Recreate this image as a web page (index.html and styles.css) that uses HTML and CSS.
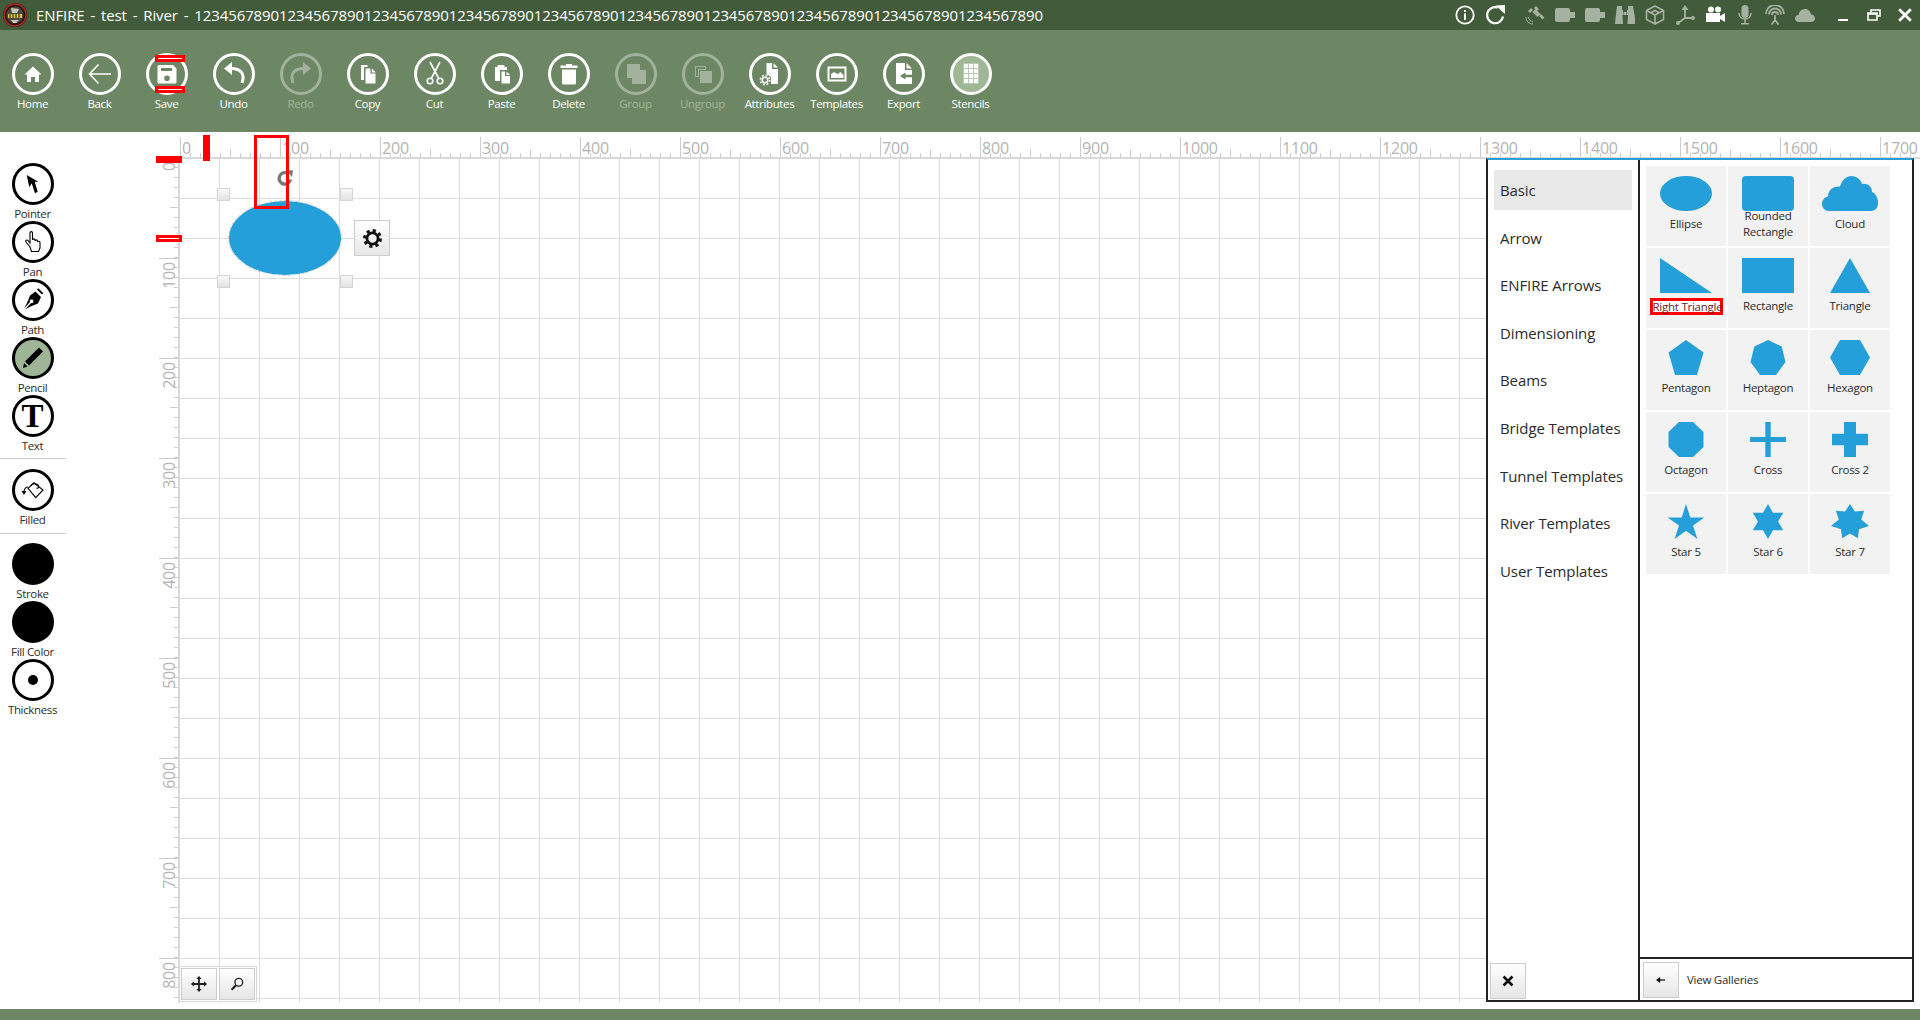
FILE: index.html
```html
<!DOCTYPE html>
<html>
<head>
<meta charset="utf-8">
<title>ENFIRE</title>
<link rel="stylesheet" href="styles.css">
</head>
<body>
<div class="app">

  <!-- title bar -->
  <div class="titlebar">
    <svg class="logo" viewBox="0 0 24 24">
      <circle cx="12" cy="12" r="12" fill="#2a1512"/>
      <circle cx="12" cy="12" r="11" fill="none" stroke="#b32a24" stroke-width="1.4"/>
      <circle cx="12" cy="12" r="8.5" fill="#4b4a42"/>
      <path d="M5 11h14v4H5z" fill="#d8c04a"/>
      <path d="M7 11v4M10 11v4M13 11v4M16 11v4" stroke="#222" stroke-width="1"/>
      <path d="M8 5l8 1-2 4H9zM8 17h8l-3 3h-3z" fill="#c9c6b8"/>
    </svg>
    <div class="title">ENFIRE - test - River - 1234567890123456789012345678901234567890123456789012345678901234567890123456789012345678901234567890</div>
    <div class="status-icons">
      <span class="sbtn on"><svg viewBox="0 0 20 20"><circle cx="10" cy="10" r="8.7" fill="none" stroke="currentColor" stroke-width="1.8"/><path d="M9 8.5h2V15H9zM9 5h2v2H9z"/></svg></span>
      <span class="sbtn on"><svg viewBox="0 0 20 20"><path d="M18 11.5A8 8 0 1 1 12.5 2.6" fill="none" stroke="currentColor" stroke-width="2.2"/><path d="M10.5 0.5 20 0v9z"/></svg></span>
      <span class="status-gap"></span>
      <span class="sbtn"><svg viewBox="0 0 20 20"><path d="M9 3l2-2 3 3-2 2zM7.5 7l3-3 5 5-3 3zM14 11l2-2 3.500 3.500-2 2zM3 6L6 3l2 2-3 3z"/><path d="M1 12c0 4 3 7 7 7M3.500 12c0 2.500 2 4.500 4.500 4.500" fill="none" stroke="currentColor" stroke-width="1"/></svg></span>
      <span class="sbtn"><svg viewBox="0 0 20 20"><rect x="0" y="3" width="15" height="14" rx="2"/><path d="M15 7h5v6h-5z"/></svg></span>
      <span class="sbtn"><svg viewBox="0 0 20 20"><rect x="0" y="3" width="15" height="14" rx="2"/><path d="M15 7h5v6h-5z"/></svg></span>
      <span class="sbtn"><svg viewBox="0 0 20 20"><path d="M2 1h5v4h1v5h-.5l.5 9H0l.5-6zM13 1h5l2 12 .500 6h-8l.5-9H12V5h1z"/><path d="M8.500 7h3v3h-3z"/></svg></span>
      <span class="sbtn"><svg viewBox="0 0 20 20" class="line"><path d="M10 1l8.500 4.500v9L10 19l-8.500-4.500v-9zM1.500 5.500L10 10l8.500-4.500M10 10v9M5.500 8l4.500-2.500L14.500 8"/></svg></span>
      <span class="sbtn"><svg viewBox="0 0 20 20" class="line thick"><path d="M10 2v11l8 0M10 13l-7 5"/><path class="solid" d="M10 0l3.500 5h-7z"/><circle class="solid" cx="18" cy="13" r="2"/><circle class="solid" cx="3" cy="18" r="2"/></svg></span>
      <span class="sbtn on"><svg viewBox="0 0 20 20"><circle cx="6" cy="4.500" r="3"/><circle cx="13" cy="4.500" r="3"/><rect x="1" y="8" width="14" height="9"/><path d="M15 11l5-3v9l-5-3z"/></svg></span>
      <span class="sbtn"><svg viewBox="0 0 20 20"><rect x="6.500" y="0" width="7" height="13" rx="3.500"/><path d="M4 8c0 8 12 8 12 0" fill="none" stroke="currentColor" stroke-width="1.500"/><path d="M9.200 14h1.600v4h3v1.500H6V18h3.200z"/></svg></span>
      <span class="sbtn"><svg viewBox="0 0 20 20" class="line thick"><path d="M1 9a9 9 0 0 1 18 0M4 9.500a6 6 0 0 1 12 0M7 10a3 3 0 0 1 6 0M10 10v5l-3.500 4.500M10 15l3.500 4.500"/></svg></span>
      <span class="sbtn"><svg viewBox="0 0 20 20"><path d="M4 17c-2.500 0-4-1.500-4-3.500S1.500 10 3.500 10C4 7 6 4 10 4c3.500 0 5.500 2.500 6 5.500 2.500 0 4 2 4 4s-1.500 3.500-4 3.500z"/></svg></span>
    </div>
    <div class="window-btns">
      <span class="wbtn"><svg viewBox="0 0 12 14"><path d="M1 11h10v2H1z"/></svg></span>
      <span class="wbtn"><svg viewBox="0 0 14 12" class="line"><path d="M4 3V1h9v6h-3M1 4h9v7H1zM1 5h9"/></svg></span>
      <span class="wbtn"><svg viewBox="0 0 12 12" class="line close"><path d="M1 1l10 10M11 1L1 11"/></svg></span>
    </div>
  </div>

  <!-- main ribbon -->
  <div class="toolbar">
    <div class="tb-item"><span class="tb-circle"><svg viewBox="0 0 36 36"><path d="M18 10.500l8.500 8H24V26h-4v-5h-4v5h-4v-7.500H9.500z"/></svg></span><span class="tb-label">Home</span></div>
    <div class="tb-item"><span class="tb-circle"><svg viewBox="0 0 36 36" class="line"><path d="M29 18H8M16.500 8.500L7.500 18l9 9.500"/></svg></span><span class="tb-label">Back</span></div>
    <div class="tb-item"><span class="tb-circle"><svg viewBox="0 0 36 36"><path fill-rule="evenodd" d="M10 9h14l3.500 3.500V26a1.500 1.500 0 0 1-1.500 1.500H10A1.500 1.500 0 0 1 8.500 26V10.500A1.500 1.500 0 0 1 10 9zM12 12v3h11v-3zM18 19.500a2.800 2.800 0 1 0 0 5.600 2.800 2.800 0 0 0 0-5.600z"/></svg></span><span class="tb-label">Save</span></div>
    <div class="tb-item"><span class="tb-circle"><svg viewBox="0 0 36 36"><path d="M26 27c3-8 0-14.500-11-14.500" fill="none" stroke="currentColor" stroke-width="3"/><path d="M8 12.500L16 6v13z"/></svg></span><span class="tb-label">Undo</span></div>
    <div class="tb-item off"><span class="tb-circle"><svg viewBox="0 0 36 36"><path d="M10 27c-3-8 0-14.500 11-14.500" fill="none" stroke="currentColor" stroke-width="3"/><path d="M28 12.500L20 6v13z"/></svg></span><span class="tb-label">Redo</span></div>
    <div class="tb-item"><span class="tb-circle"><svg viewBox="0 0 36 36"><path d="M11 9h6.500v2H14v13h-3z"/><path fill-rule="evenodd" d="M15.500 12.500h4.800l.2 5h5v10h-10z"/><path d="M21.800 12.500l4 4h-4z"/></svg></span><span class="tb-label">Copy</span></div>
    <div class="tb-item"><span class="tb-circle"><svg viewBox="0 0 36 36" class="line"><path d="M13 6l8.500 16M23 6l-8.500 16"/><circle cx="13" cy="25" r="2.800"/><circle cx="23" cy="25" r="2.800"/></svg></span><span class="tb-label">Cut</span></div>
    <div class="tb-item"><span class="tb-circle"><svg viewBox="0 0 36 36"><path d="M11 11h2.500V9h7v2H23v3h-7v11h-5z"/><path d="M17.500 15.500h3.500v4.500h5v7.500h-8.500z"/><path d="M22.500 15.500l3.500 3.500h-3.500z"/></svg></span><span class="tb-label">Paste</span></div>
    <div class="tb-item"><span class="tb-circle"><svg viewBox="0 0 36 36"><path d="M15 8h6v1.500h5.500V12h-17V9.500H15zM11 13.500h14V27a1.500 1.500 0 0 1-1.500 1.500h-11A1.500 1.500 0 0 1 11 27z"/></svg></span><span class="tb-label">Delete</span></div>
    <div class="tb-item off"><span class="tb-circle"><svg viewBox="0 0 36 36"><path d="M9 8h13v6h6v14H14v-6H9z"/></svg></span><span class="tb-label">Group</span></div>
    <div class="tb-item off"><span class="tb-circle"><svg viewBox="0 0 36 36"><path fill-rule="evenodd" d="M10 10h11v4h-7v7h-4zM11 11v9h2v-7h7v-2z"/><path d="M15 15h12v12H15z"/></svg></span><span class="tb-label">Ungroup</span></div>
    <div class="tb-item"><span class="tb-circle"><svg viewBox="0 0 36 36"><path d="M14.500 7H20v6h6v15h-7v-7l-4.500-3z"/><path d="M21.500 7l4.500 4.500h-4.500z"/><circle cx="13" cy="24" r="2.800" fill="none" stroke="currentColor" stroke-width="1.500"/><circle cx="13" cy="24" r="4.700" fill="none" stroke="currentColor" stroke-width="1.600" stroke-dasharray="1.800 1.900"/></svg></span><span class="tb-label">Attributes</span></div>
    <div class="tb-item"><span class="tb-circle"><svg viewBox="0 0 36 36"><path fill-rule="evenodd" d="M8.500 10.500h19v15h-19zM10.500 12.500v11h15v-11z"/><path d="M12 22v-4l3-2 3.500 2 3-2 3 3v3z"/></svg></span><span class="tb-label">Templates</span></div>
    <div class="tb-item"><span class="tb-circle"><svg viewBox="0 0 36 36"><path d="M10 7h9v7h7v14H10z"/><path d="M20.500 7l5.500 5.500h-5.500z"/><path d="M28 20H16" class="toolbar-cut"/><path d="M19.500 16.500L14 20l5.500 3.500z" class="toolbar-cutfill"/></svg></span><span class="tb-label">Export</span></div>
    <div class="tb-item active"><span class="tb-circle"><svg viewBox="0 0 36 36"><rect x="10" y="7" width="16" height="21" fill="#b9cab1"/><path d="M11 8h4v4h-4zM16 8h4v4h-4zM21 8h4v4h-4zM11 13h4v4h-4zM16 13h4v4h-4zM21 13h4v4h-4zM11 18h4v4h-4zM16 18h4v4h-4zM21 18h4v4h-4zM11 23h4v4h-4zM16 23h4v4h-4zM21 23h4v4h-4z"/></svg></span><span class="tb-label">Stencils</span></div>
  </div>

  <div class="main">

    <!-- drawing tools -->
    <div class="tools">
      <div class="tool-group">
        <div class="tool"><span class="tool-circle"><svg viewBox="0 0 36 36"><path d="M11.700 9l2.600 12.300 2.400-4L20 27.300l2.700-1.600-3-10h3.600z"/></svg></span><span class="tool-label">Pointer</span></div>
        <div class="tool"><span class="tool-circle"><svg viewBox="0 0 36 36" class="line thin"><path d="M15 23l-4-5c-1-1.500 1-2.500 2-1.500l2 2.500V9c0-1.800 2.500-1.800 2.500 0v7c0-1.500 2.500-1.500 2.500 0v1c0-1.500 2.500-1.500 2.500 0v1c0-1.200 2.500-1 2.500 .5V24l-1.500 3.500h-7z"/></svg></span><span class="tool-label">Pan</span></div>
        <div class="tool"><span class="tool-circle"><svg viewBox="0 0 36 36"><path d="M22 7.500l1.300-1.300 5 5-1.300 1.300z"/><path d="M20.500 9.500l5.500 5.500-3 6.500-7.500 3-5.500 3 6-6.500a1.800 1.800 0 1 0-1-1l-6 6.500 3-5.500 3-7.500z"/></svg></span><span class="tool-label">Path</span></div>
        <div class="tool"><span class="tool-circle sel"><svg viewBox="0 0 36 36"><path d="M24 7.500l4 4-14 14-4-4z"/><path d="M9 23l3.500 3.500L8 28z"/></svg></span><span class="tool-label">Pencil</span></div>
        <div class="tool"><span class="tool-circle tool-t">T</span><span class="tool-label">Text</span></div>
      </div>
      <div class="tool-group filled-group">
        <div class="tool"><span class="tool-circle"><svg viewBox="0 0 36 36" class="line thin"><path d="M13 16.300L19 10.700 28 18l-7.300 7.700z"/><path d="M15.500 14c2-3 7-3 8 0 .5 2-1 2.500-2 2"/><path d="M13 15c-2 0-4 2-4 4.500"/><path class="solid" d="M9 23l-2.500-4h5z"/></svg></span><span class="tool-label">Filled</span></div>
      </div>
      <div class="tool"><span class="tool-circle black"></span><span class="tool-label">Stroke</span></div>
      <div class="tool"><span class="tool-circle black"></span><span class="tool-label">Fill Color</span></div>
      <div class="tool"><span class="tool-circle"><span class="dot"></span></span><span class="tool-label">Thickness</span></div>
    </div>

    <div class="workspace">
      <div class="ruler-top">
        <span class="r-corner"></span>
        <span class="rh"><i>0</i></span><span class="rh"><i>100</i></span><span class="rh"><i>200</i></span><span class="rh"><i>300</i></span><span class="rh"><i>400</i></span><span class="rh"><i>500</i></span><span class="rh"><i>600</i></span><span class="rh"><i>700</i></span><span class="rh"><i>800</i></span><span class="rh"><i>900</i></span><span class="rh"><i>1000</i></span><span class="rh"><i>1100</i></span><span class="rh"><i>1200</i></span><span class="rh"><i>1300</i></span><span class="rh"><i>1400</i></span><span class="rh"><i>1500</i></span><span class="rh"><i>1600</i></span><span class="rh"><i>1700</i></span>
      </div>
      <div class="work-row">
        <div class="ruler-left">
          <span class="rv"><i>0</i></span><span class="rv"><i>100</i></span><span class="rv"><i>200</i></span><span class="rv"><i>300</i></span><span class="rv"><i>400</i></span><span class="rv"><i>500</i></span><span class="rv"><i>600</i></span><span class="rv"><i>700</i></span><span class="rv"><i>800</i></span>
        </div>

        <div class="canvas">
          <div class="selection">
            <span class="handle h-tl"></span><span class="handle h-tr"></span><span class="handle h-bl"></span><span class="handle h-br"></span>
            <svg class="rotate" viewBox="0 0 16 16"><path d="M13.500 9.500A5.700 5.700 0 1 1 9 2.800" fill="none" stroke="#777" stroke-width="3.400"/><path d="M9 0l7 .5-1 6.500z" fill="#777"/></svg>
            <div class="ellipse"></div>
            <span class="btn gear"><svg viewBox="0 0 20 20"><circle cx="10" cy="10" r="5.300" fill="none" stroke="#111" stroke-width="2.600"/><circle cx="10" cy="10" r="7.500" fill="none" stroke="#111" stroke-width="3" stroke-dasharray="3 2.890"/></svg></span>
          </div>
          <div class="zoom-btns">
            <span class="btn small"><svg viewBox="0 0 20 20"><path d="M10 1l3 3.500h-2V9h4.500V7l3.500 3-3.500 3v-2H11v4.500h2L10 19l-3-3.500h2V11H4.500v2L1 10l3.500-3v2H9V4.500H7z"/></svg></span>
            <span class="btn small"><svg viewBox="0 0 20 20"><circle cx="12" cy="8" r="4.300" fill="none" stroke="#222" stroke-width="1.500"/><path d="M9 11.500l-5 5" stroke="#222" stroke-width="2.400"/></svg></span>
          </div>
        </div>

        <!-- stencil panel -->
        <div class="panel">
          <div class="panel-nav">
            <div class="nav-item current">Basic</div>
            <div class="nav-item">Arrow</div>
            <div class="nav-item">ENFIRE Arrows</div>
            <div class="nav-item">Dimensioning</div>
            <div class="nav-item">Beams</div>
            <div class="nav-item">Bridge Templates</div>
            <div class="nav-item">Tunnel Templates</div>
            <div class="nav-item">River Templates</div>
            <div class="nav-item">User Templates</div>
            <span class="btn close-btn"><svg viewBox="0 0 12 12"><path d="M1.500 1.500l9 9M10.500 1.500l-9 9" stroke="#111" stroke-width="2.600"/></svg></span>
          </div>
          <div class="panel-gallery">
            <div class="gallery">
              <div class="cell"><svg viewBox="0 0 80 35"><ellipse cx="40" cy="17.500" rx="26" ry="17.500"/></svg><div class="cell-label">Ellipse</div></div>
              <div class="cell"><svg viewBox="0 0 80 35"><rect x="14" y="0" width="52" height="35" rx="4"/></svg><div class="cell-label">Rounded<br>Rectangle</div></div>
              <div class="cell"><svg viewBox="0 0 80 35"><path d="M19 35c-5 0-7-4-7-7.500s3-6.500 6-7c0-6.500 5-10.500 12-10C32 4 37 0 41 0c6 0 10 4 11 8 5-1 10 2 10 8 4 2 6 6 6 11s-3 8-7 8z"/></svg><div class="cell-label">Cloud</div></div>
              <div class="cell"><svg viewBox="0 0 80 35"><polygon points="14,0 66,35 14,35"/></svg><div class="cell-label"><span class="marked">Right Triangle</span></div></div>
              <div class="cell"><svg viewBox="0 0 80 35"><rect x="14" y="0" width="52" height="35"/></svg><div class="cell-label">Rectangle</div></div>
              <div class="cell"><svg viewBox="0 0 80 35"><polygon points="40,0 60,35 20,35"/></svg><div class="cell-label">Triangle</div></div>
              <div class="cell"><svg viewBox="0 0 80 35"><polygon points="40,0 57.500,12.500 51,35 29,35 22.500,12.500"/></svg><div class="cell-label">Pentagon</div></div>
              <div class="cell"><svg viewBox="0 0 80 35"><polygon points="40,0 53.700,6.500 57.500,22 48,35 32,35 22.500,22 26.300,6.500"/></svg><div class="cell-label">Heptagon</div></div>
              <div class="cell"><svg viewBox="0 0 80 35"><polygon points="30,0 50,0 60,17.500 50,35 30,35 20,17.500"/></svg><div class="cell-label">Hexagon</div></div>
              <div class="cell"><svg viewBox="0 0 80 35"><polygon points="33,0 47,0 57.500,10 57.500,25 47,35 33,35 22.500,25 22.500,10"/></svg><div class="cell-label">Octagon</div></div>
              <div class="cell"><svg viewBox="0 0 80 35"><path d="M37.300 0h5.400v15H58v5H42.700v15h-5.400V20H22v-5h15.300z"/></svg><div class="cell-label">Cross</div></div>
              <div class="cell"><svg viewBox="0 0 80 35"><path d="M34 0h12v11.700h12v11.600H46V35H34V23.300H22V11.700h12z"/></svg><div class="cell-label">Cross 2</div></div>
              <div class="cell"><svg viewBox="0 0 80 35"><polygon points="40,0 44.300,13.400 58.400,13.400 47,21.600 51.400,35 40,26.700 28.600,35 33,21.600 21.600,13.400 35.700,13.400"/></svg><div class="cell-label">Star 5</div></div>
              <div class="cell"><svg viewBox="0 0 80 35"><polygon points="40,0 45,8.750 55.200,8.750 50.100,17.500 55.200,26.250 45,26.250 40,35 35,26.250 24.800,26.250 29.900,17.500 24.800,8.750 35,8.750"/></svg><div class="cell-label">Star 6</div></div>
              <div class="cell"><svg viewBox="0 0 80 35"><polygon points="40,0 45,7.600 54.100,6.800 51.200,15.400 59,22 49,25.200 47.800,34.200 40,29.500 32.200,34.200 31,25.200 21,22 28.800,15.400 25.900,6.800 35,7.600"/></svg><div class="cell-label">Star 7</div></div>
            </div>
            <div class="gallery-foot">
              <span class="btn back-btn"><svg viewBox="0 0 12 12"><path d="M11 6H3" stroke="#111" stroke-width="1.500"/><path d="M0 6l5-3.500v7z" fill="#111"/></svg></span>
              <span class="foot-text">View Galleries</span>
            </div>
          </div>
        </div>
      </div>
    </div>
  </div>

  <div class="statusbar"></div>

  <!-- red review marks laid over the screen -->
  <span class="mark mark-save-top"></span>
  <span class="mark mark-save-bottom"></span>
  <span class="mark mark-ruler-v"></span>
  <span class="mark mark-ruler-h"></span>
  <span class="mark mark-ruler-h2"></span>
  <span class="mark-box"></span>
</div>
</body>
</html>
```

FILE: styles.css
```css
* {
    box-sizing: border-box;
}

html, body {
    margin: 0;
    height: 100%;
    overflow: hidden;
    background: #fff;
}

body {
    font-family: "Open Sans", "Noto Sans", sans-serif;
    color: #222;
}

svg {
    display: block;
    fill: currentColor;
}

svg .solid {
    fill: currentColor;
    stroke: none;
}

svg.line {
    fill: none;
    stroke: currentColor;
    stroke-width: 1.6;
}

svg.thick {
    stroke-width: 1.8;
}

svg.thin {
    stroke-width: 1.1;
}

.app {
    position: relative;
    width: 1920px;
    height: 1020px;
    display: flex;
    flex-direction: column;
}

/* title bar */
.titlebar {
    height: 30px;
    flex: none;
    display: flex;
    align-items: center;
    background: #425b3b;
    color: #fff;
}

.logo {
    width: 24px;
    height: 24px;
    margin-left: 3px;
    flex: none;
}

.title {
    margin-left: 9px;
    font-size: 15px;
    letter-spacing: -0.09px;
    word-spacing: 2px;
    white-space: nowrap;
}

.status-icons {
    margin-left: auto;
    display: flex;
    align-items: center;
}

.sbtn {
    width: 30px;
    display: flex;
    justify-content: center;
    color: #a5b1a1;
}

.sbtn.on {
    color: #fff;
}

.sbtn svg {
    width: 20px;
    height: 20px;
}

.status-gap {
    width: 10px;
}

.window-btns {
    display: flex;
    margin-left: 7px;
    margin-right: 0;
}

.wbtn {
    width: 31px;
    display: flex;
    justify-content: center;
}

.wbtn svg {
    width: 14px;
    height: 14px;
}

.wbtn svg.close {
    stroke-width: 2.4;
}

/* ribbon */
.toolbar {
    height: 102px;
    flex: none;
    display: flex;
    gap: 2px;
    padding-top: 23px;
    background: #6d8764;
    color: #fff;
}

.tb-item {
    width: 65px;
    display: flex;
    flex-direction: column;
    align-items: center;
}

.tb-circle {
    width: 42px;
    height: 42px;
    border: 3px solid #fff;
    border-radius: 50%;
    flex: none;
}

.tb-circle svg {
    width: 36px;
    height: 36px;
}

.tb-label {
    margin-top: 1px;
    font-size: 11.500px;
    line-height: 16px;
    letter-spacing: -0.35px;
    white-space: nowrap;
}

.tb-item.off {
    opacity: 0.36;
}

.tb-item.active .tb-circle {
    background: #a0b796;
}

.toolbar-cut {
    stroke: #6d8764;
    stroke-width: 2.500;
}

.toolbar-cutfill {
    fill: #6d8764;
}

/* main area */
.main {
    height: 877px;
    flex: none;
    display: flex;
}

.tools {
    width: 156px;
    flex: none;
    padding-top: 31px;
}

.tool-group {
    width: 66px;
    padding-bottom: 5px;
    margin-bottom: 10px;
    border-bottom: 1px solid #ccc;
}

.tool-group.filled-group {
    padding-bottom: 6px;
    margin-bottom: 9px;
}

.tool {
    width: 65px;
    height: 58px;
    display: flex;
    flex-direction: column;
    align-items: center;
}

.tool-circle {
    width: 42px;
    height: 42px;
    flex: none;
    border: 3px solid #000;
    border-radius: 50%;
    color: #000;
    display: flex;
    align-items: center;
    justify-content: center;
}

.tool-circle svg {
    width: 36px;
    height: 36px;
    flex: none;
}

.tool-circle.sel {
    background: #9fb696;
}

.tool-circle.black {
    background: #000;
}

.tool-t {
    font-family: "Liberation Serif", serif;
    font-size: 33px;
    font-weight: bold;
    line-height: 36px;
}

.dot {
    width: 10px;
    height: 10px;
    border-radius: 50%;
    background: #000;
}

.tool-label {
    font-size: 11.500px;
    line-height: 18px;
    letter-spacing: -0.35px;
    color: #2b2b2b;
    white-space: nowrap;
}

/* rulers */
.workspace {
    flex: 1;
    min-width: 0;
    display: flex;
    flex-direction: column;
    overflow: hidden;
}

.ruler-top {
    height: 27px;
    flex: none;
    display: flex;
    align-items: flex-end;
    border-bottom: 2px solid #d8d8d8;
    margin-left: 23px;
}

.r-corner {
    width: 1px;
    flex: none;
}

.rh {
    width: 100px;
    height: 20px;
    flex: none;
    border-left: 1px solid #ccc;
    padding-left: 1px;
    background:
        linear-gradient(#ccc, #ccc) 49px 100% / 1px 8px no-repeat,
        repeating-linear-gradient(90deg, transparent 0 9px, #ccc 9px 10px) 0 100% / 100% 4px no-repeat;
}

.rh i, .rv i {
    display: block;
    font-style: normal;
    font-size: 16px;
    line-height: 20px;
    letter-spacing: -0.2px;
    color: #b4b4b4;
}

.rh i {
    line-height: 22px;
}

.work-row {
    flex: 1;
    min-height: 0;
    display: flex;
    margin-bottom: 6px;
}

.ruler-left {
    width: 24px;
    flex: none;
    overflow: hidden;
    border-right: 2px solid #d8d8d8;
    margin-top: -1px;
}

.rv {
    display: block;
    width: 19px;
    height: 100px;
    border-top: 1px solid #ccc;
    margin-left: 3px;
    background:
        linear-gradient(#ccc, #ccc) 100% 49px / 8px 1px no-repeat,
        repeating-linear-gradient(180deg, transparent 0 9px, #ccc 9px 10px) 100% 0 / 4px 100% no-repeat;
    background-origin: border-box;
}

.rv i {
    writing-mode: vertical-rl;
    transform: rotate(180deg);
    width: 20px;
    margin-top: 3px;
}

/* drawing canvas */
.canvas {
    position: relative;
    flex: 1;
    min-width: 0;
    background-image:
        linear-gradient(#dcdcdc 1px, transparent 1px),
        linear-gradient(90deg, #dcdcdc 1px, transparent 1px);
    background-size: 40px 40px;
    background-position: -1px -1px;
}

.selection {
    position: absolute;
    left: 37px;
    top: 29px;
    width: 136px;
    height: 100px;
}

.ellipse {
    position: absolute;
    left: 12px;
    top: 13px;
    width: 112px;
    height: 74px;
    border-radius: 50%;
    background: #259fd9;
    outline: 1px dashed #ccc;
}

.handle {
    position: absolute;
    width: 13px;
    height: 13px;
    border: 1px solid #d4d4d4;
    background: linear-gradient(#f8f8f8, #e2e2e2);
}

.h-tl { left: 0; top: 0; }
.h-tr { left: 123px; top: 0; }
.h-bl { left: 0; top: 87px; }
.h-br { left: 123px; top: 87px; }

.rotate {
    position: absolute;
    left: 60px;
    top: -18px;
    width: 16px;
    height: 16px;
}

.btn {
    display: flex;
    align-items: center;
    justify-content: center;
    width: 36px;
    height: 36px;
    border: 1px solid #ccc;
    background: linear-gradient(#fff, #e6e6e6);
}

.gear {
    position: absolute;
    left: 137px;
    top: 32px;
}

.gear svg {
    width: 21px;
    height: 21px;
}

.zoom-btns {
    position: absolute;
    left: -1px;
    bottom: 1px;
    display: flex;
    gap: 2px;
    padding: 1px 1px;
    background: #fff;
    border: 1px solid #d8d8d8;
}

.btn.small {
    height: 32px;
}

.btn.small svg {
    width: 18px;
    height: 18px;
}

/* stencil panel */
.panel {
    width: 428px;
    flex: none;
    display: flex;
    margin: -1px 6px 1px 0;
    background: #fff;
    border: 2px solid #222;
    border-top: 2px solid #2a9fd8;
}

.panel-nav {
    width: 152px;
    flex: none;
    display: flex;
    flex-direction: column;
    padding: 10px 6px 0;
    border-right: 2px solid #222;
}

.nav-item {
    height: 40px;
    flex: none;
    margin-bottom: 7.600px;
    padding-left: 6px;
    font-size: 15px;
    line-height: 40px;
    letter-spacing: -0.1px;
    color: #2b2b2b;
    white-space: nowrap;
}

.nav-item.current {
    background: #e8e8e8;
}

.close-btn {
    margin: auto 0 1px -4px;
}

.close-btn svg {
    width: 12px;
    height: 12px;
}

.panel-gallery {
    flex: 1;
    min-width: 0;
    display: flex;
    flex-direction: column;
}

.gallery {
    flex: 1;
    padding: 6px 0 0 6px;
    display: grid;
    grid-template-columns: repeat(3, 80px);
    grid-auto-rows: 80px;
    gap: 2px;
    align-content: start;
}

.cell {
    background: #f2f2f2;
    padding-top: 10px;
    color: #259fd9;
}

.cell svg {
    width: 80px;
    height: 35px;
}

.cell-label {
    height: 26px;
    display: flex;
    align-items: center;
    justify-content: center;
    text-align: center;
    font-size: 11.500px;
    line-height: 16px;
    letter-spacing: -0.25px;
    color: #2b2b2b;
}

.marked {
    width: 73px;
    height: 17px;
    flex: none;
    border: 3px solid #f00;
    background: #fff;
    line-height: 11px;
    white-space: nowrap;
    color: #6b1d1d;
    margin-top: 1px;
}

.gallery-foot {
    height: 43px;
    flex: none;
    display: flex;
    align-items: flex-start;
    border-top: 2px solid #222;
    padding: 3px 0 0 3px;
}

.back-btn svg {
    width: 10px;
    height: 10px;
}

.foot-text {
    margin-left: 8px;
    font-size: 11.500px;
    line-height: 36px;
    letter-spacing: -0.25px;
    color: #2b2b2b;
}

.statusbar {
    flex: 1;
    background: #6d8764;
}

/* red marks */
.mark, .mark-box {
    position: absolute;
}

.mark {
    background: #f00;
}

.mark-save-top, .mark-save-bottom {
    left: 155px;
    width: 30px;
    height: 7px;
}

.mark-save-top { top: 55px; }
.mark-save-bottom { top: 86px; }

.mark-save-top::after, .mark-save-bottom::after, .mark-ruler-h2::after {
    content: "";
    position: absolute;
    left: 3px;
    right: 3px;
    top: 3px;
    height: 1px;
    background: #fff;
}

.mark-ruler-v {
    left: 203px;
    top: 135px;
    width: 7px;
    height: 26px;
}

.mark-ruler-h {
    left: 156px;
    top: 156px;
    width: 26px;
    height: 7px;
}

.mark-ruler-h2 {
    left: 156px;
    top: 235px;
    width: 26px;
    height: 7px;
}

.mark-box {
    left: 254px;
    top: 135px;
    width: 35px;
    height: 74px;
    border: 3px solid #f00;
}
```
